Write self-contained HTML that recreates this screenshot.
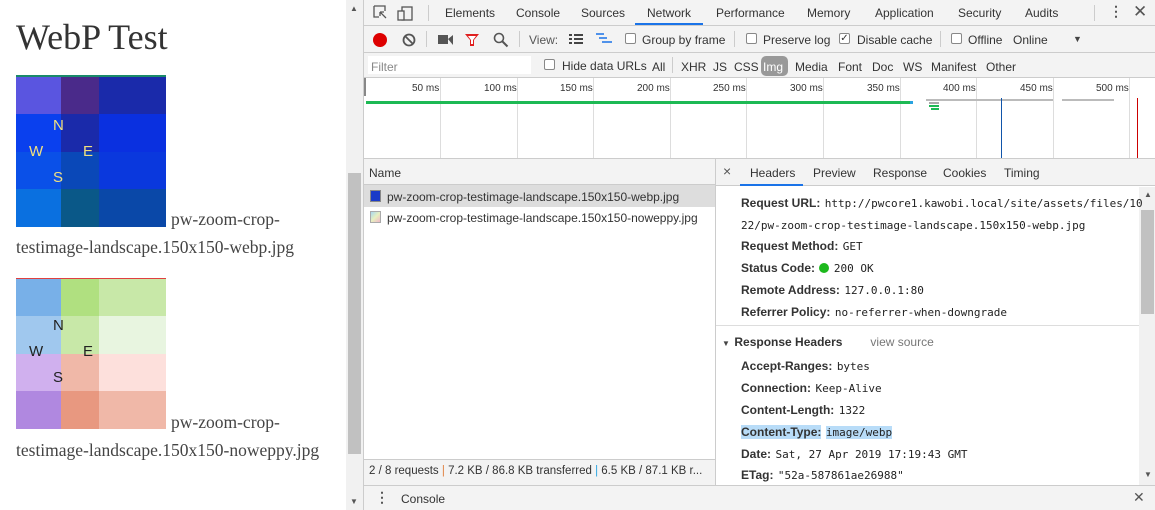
<!DOCTYPE html>
<html><head><meta charset="utf-8"><style>
*{box-sizing:border-box;margin:0;padding:0}
body{width:1155px;height:510px;overflow:hidden;background:#fff;font-family:"Liberation Sans",sans-serif;position:relative}
.a{position:absolute}
.pg{font-family:"Liberation Serif",serif;color:#444}
.img{position:absolute;width:150px;height:150px;display:grid;grid-template-columns:45px 38px 67px;grid-template-rows:37px 38px 37px 38px}
.lt{position:absolute;font:15px "Liberation Sans",sans-serif}
.dt{font-size:12px;color:#333}
.tab{position:absolute;top:6px;font-size:12px;color:#333}
.k{font-weight:bold;color:#333;font-size:12px}
.v{font-family:"DejaVu Sans Mono","Liberation Mono",monospace;font-size:11px;color:#222}
.row{position:absolute;left:741px;white-space:nowrap}
.cb{position:absolute;width:11px;height:11px;border:1px solid #888;border-radius:2px;background:#fff}
.vl{position:absolute;width:1px;background:#ccc}
</style></head><body>
<!-- page -->
<div class="a pg" style="left:16px;top:16px;font-size:36px;color:#333">WebP Test</div>
<div class="img" style="left:16px;top:75px;border-top:2px solid #1a8a6a">
<div style="background:#5a55e0"></div><div style="background:#4a2a8a"></div><div style="background:#1a2aaa"></div>
<div style="background:#0a40ee"></div><div style="background:#1a2aaa"></div><div style="background:#0a30e0"></div>
<div style="background:#0a50e8"></div><div style="background:#0a48b8"></div><div style="background:#0a38dd"></div>
<div style="background:#0a70e0"></div><div style="background:#0a5888"></div><div style="background:#0a48a8"></div>
<span class="lt" style="left:37px;top:40px;color:#f0e080">N</span><span class="lt" style="left:13px;top:66px;color:#f0e080">W</span><span class="lt" style="left:67px;top:66px;color:#f0e080">E</span><span class="lt" style="left:37px;top:92px;color:#f0e080">S</span>
</div>
<div class="a pg" style="left:171px;top:209px;font-size:17.5px">pw-zoom-crop-</div>
<div class="a pg" style="left:16px;top:237px;font-size:17.5px">testimage-landscape.150x150-webp.jpg</div>
<div class="img" style="left:16px;top:278px;border-top:1px solid #e04040;border-bottom:1px solid #e04040">
<div style="background:#78b0e8"></div><div style="background:#b0e080"></div><div style="background:#c8e8a8"></div>
<div style="background:#a0c8ee"></div><div style="background:#c8e8a8"></div><div style="background:#e8f5e0"></div>
<div style="background:#d0b0ee"></div><div style="background:#f0b8a8"></div><div style="background:#fde0dc"></div>
<div style="background:#b088e0"></div><div style="background:#e89880"></div><div style="background:#f0b8a8"></div>
<span class="lt" style="left:37px;top:38px;color:#222">N</span><span class="lt" style="left:13px;top:64px;color:#222">W</span><span class="lt" style="left:67px;top:64px;color:#222">E</span><span class="lt" style="left:37px;top:90px;color:#222">S</span>
</div>
<div class="a pg" style="left:171px;top:412px;font-size:17.5px">pw-zoom-crop-</div>
<div class="a pg" style="left:16px;top:440px;font-size:17.5px">testimage-landscape.150x150-noweppy.jpg</div>
<!-- page scrollbar -->
<div class="a" style="left:346px;top:0;width:17px;height:510px;background:#f1f1f1"></div>
<div class="a" style="left:348px;top:173px;width:13px;height:281px;background:#c1c1c1"></div>
<div class="a" style="left:350px;top:4px;font-size:8px;color:#555">▲</div>
<div class="a" style="left:350px;top:497px;font-size:8px;color:#555">▼</div>
<!-- devtools -->
<div class="a" style="left:363px;top:0;width:792px;height:510px;background:#fff;border-left:1px solid #ccc"></div>
<div class="a" style="left:364px;top:0;width:791px;height:77px;background:#f3f3f3"></div>
<div class="a" style="left:364px;top:25px;width:791px;height:1px;background:#ccc"></div>
<div class="a" style="left:364px;top:52px;width:791px;height:1px;background:#ccc"></div>
<div class="a" style="left:364px;top:77px;width:791px;height:1px;background:#ccc"></div>
<svg class="a" style="left:372px;top:4px" width="50" height="18"><path d="M2 2h11v5M2 2v11h5M8 8l6 6M8 8h4M8 8v4" stroke="#555" fill="none" stroke-width="1.3"/><rect x="30" y="3" width="10" height="13" stroke="#555" fill="none" stroke-width="1.3"/><rect x="26" y="7" width="6" height="9" stroke="#555" fill="#f3f3f3" stroke-width="1.3"/></svg>
<div class="vl" style="left:428px;top:5px;height:16px"></div>
<span class="tab" style="left:445px">Elements</span><span class="tab" style="left:516px">Console</span><span class="tab" style="left:581px">Sources</span><span class="tab" style="left:647px">Network</span><span class="tab" style="left:716px">Performance</span><span class="tab" style="left:807px">Memory</span><span class="tab" style="left:875px">Application</span><span class="tab" style="left:958px">Security</span><span class="tab" style="left:1025px">Audits</span>
<div class="a" style="left:635px;top:23px;width:68px;height:2px;background:#1a73e8"></div>
<div class="vl" style="left:1094px;top:5px;height:16px"></div>
<div class="a" style="left:1109px;top:3px;font-size:14px;color:#555;font-weight:bold">⋮</div>
<div class="a" style="left:1133px;top:2px;font-size:17px;color:#555">✕</div>
<!-- toolbar -->
<div class="a" style="left:373px;top:33px;width:14px;height:14px;border-radius:50%;background:#d00"></div>
<svg class="a" style="left:402px;top:33px" width="14" height="14"><circle cx="7" cy="7" r="5.5" stroke="#555" stroke-width="1.8" fill="none"/><path d="M3 3l8 8" stroke="#555" stroke-width="1.8"/></svg>
<div class="vl" style="left:426px;top:31px;height:16px"></div>
<svg class="a" style="left:438px;top:34px" width="16" height="12"><rect x="0" y="1" width="10" height="9" fill="#555"/><path d="M10 5l5-4v10z" fill="#555"/></svg>
<svg class="a" style="left:465px;top:33px" width="14" height="14"><path d="M0 1h14l-5 6v6h-4v-6z" fill="#e02020"/><path d="M3 3h8l-3 4v4h-2v-4z" fill="#fff"/></svg>
<svg class="a" style="left:493px;top:32px" width="16" height="16"><circle cx="6" cy="6" r="4.5" stroke="#555" stroke-width="1.6" fill="none"/><path d="M9.5 9.5l5 5" stroke="#555" stroke-width="2"/></svg>
<div class="vl" style="left:519px;top:31px;height:16px"></div>
<span class="a dt" style="left:529px;top:33px;color:#555">View:</span>
<svg class="a" style="left:569px;top:34px" width="14" height="11"><path d="M0 1h3M5 1h9M0 5h3M5 5h9M0 9h3M5 9h9" stroke="#444" stroke-width="2"/></svg>
<svg class="a" style="left:596px;top:33px" width="18" height="12"><path d="M0 1h8M3 5h8M6 9h4M10 9h6" stroke="#1a73e8" stroke-width="1.6"/></svg>
<div class="cb" style="left:625px;top:33px"></div><span class="a dt" style="left:642px;top:33px">Group by frame</span>
<div class="vl" style="left:734px;top:31px;height:16px"></div>
<div class="cb" style="left:746px;top:33px"></div><span class="a dt" style="left:763px;top:33px">Preserve log</span>
<div class="cb" style="left:839px;top:33px;font-size:10px;line-height:9px;text-align:center;color:#333">✓</div><span class="a dt" style="left:857px;top:33px">Disable cache</span>
<div class="vl" style="left:940px;top:31px;height:16px"></div>
<div class="cb" style="left:951px;top:33px"></div><span class="a dt" style="left:968px;top:33px">Offline</span><span class="a dt" style="left:1013px;top:33px">Online</span>
<span class="a" style="left:1073px;top:34px;font-size:9px;color:#444">▼</span>
<!-- filter row -->
<div class="a" style="left:368px;top:56px;width:163px;height:18px;background:#fff"></div>
<span class="a dt" style="left:371px;top:60px;color:#888">Filter</span>
<div class="cb" style="left:544px;top:59px"></div><span class="a dt" style="left:562px;top:59px">Hide data URLs</span><span class="a dt" style="left:652px;top:60px">All</span>
<div class="vl" style="left:672px;top:57px;height:16px"></div>
<span class="a dt" style="left:681px;top:60px">XHR</span><span class="a dt" style="left:713px;top:60px">JS</span><span class="a dt" style="left:734px;top:60px">CSS</span>
<div class="a" style="left:761px;top:56px;width:27px;height:20px;border-radius:5px;background:#999"></div>
<span class="a dt" style="left:763px;top:60px;color:#fff">Img</span>
<span class="a dt" style="left:795px;top:60px">Media</span><span class="a dt" style="left:838px;top:60px">Font</span><span class="a dt" style="left:872px;top:60px">Doc</span><span class="a dt" style="left:903px;top:60px">WS</span><span class="a dt" style="left:931px;top:60px">Manifest</span><span class="a dt" style="left:986px;top:60px">Other</span>
<!-- timeline -->
<div class="a" style="left:364px;top:78px;width:2px;height:18px;background:#888"></div>
<div class="vl" style="left:440px;top:78px;height:80px;background:#ddd"></div>
<div class="vl" style="left:517px;top:78px;height:80px;background:#ddd"></div>
<div class="vl" style="left:593px;top:78px;height:80px;background:#ddd"></div>
<div class="vl" style="left:670px;top:78px;height:80px;background:#ddd"></div>
<div class="vl" style="left:746px;top:78px;height:80px;background:#ddd"></div>
<div class="vl" style="left:823px;top:78px;height:80px;background:#ddd"></div>
<div class="vl" style="left:900px;top:78px;height:80px;background:#ddd"></div>
<div class="vl" style="left:976px;top:78px;height:80px;background:#ddd"></div>
<div class="vl" style="left:1053px;top:78px;height:80px;background:#ddd"></div>
<div class="vl" style="left:1129px;top:78px;height:80px;background:#ddd"></div>
<div class="a" style="font-size:10px;color:#333;top:83px;left:412px">50 ms</div>
<div class="a" style="font-size:10px;color:#333;top:83px;left:484px">100 ms</div>
<div class="a" style="font-size:10px;color:#333;top:83px;left:560px">150 ms</div>
<div class="a" style="font-size:10px;color:#333;top:83px;left:637px">200 ms</div>
<div class="a" style="font-size:10px;color:#333;top:83px;left:713px">250 ms</div>
<div class="a" style="font-size:10px;color:#333;top:83px;left:790px">300 ms</div>
<div class="a" style="font-size:10px;color:#333;top:83px;left:867px">350 ms</div>
<div class="a" style="font-size:10px;color:#333;top:83px;left:943px">400 ms</div>
<div class="a" style="font-size:10px;color:#333;top:83px;left:1020px">450 ms</div>
<div class="a" style="font-size:10px;color:#333;top:83px;left:1096px">500 ms</div>
<div class="a" style="left:366px;top:101px;width:544px;height:3px;background:#1db954"></div>
<div class="a" style="left:910px;top:101px;width:3px;height:3px;background:#29a3e0"></div>
<div class="a" style="left:926px;top:99px;width:127px;height:2px;background:#bbb"></div>
<div class="a" style="left:929px;top:102px;width:10px;height:2px;background:#aaa"></div>
<div class="a" style="left:929px;top:105px;width:10px;height:2px;background:#1db954"></div>
<div class="a" style="left:931px;top:108px;width:8px;height:2px;background:#1db954"></div>
<div class="a" style="left:1062px;top:99px;width:52px;height:2px;background:#bbb"></div>
<div class="a" style="left:1001px;top:98px;width:1px;height:60px;background:#1155aa"></div>
<div class="a" style="left:1137px;top:98px;width:1px;height:60px;background:#c00"></div>
<div class="a" style="left:364px;top:158px;width:791px;height:1px;background:#ccc"></div>
<!-- name panel -->
<div class="a" style="left:364px;top:159px;width:351px;height:26px;background:#f3f3f3;border-bottom:1px solid #ccc"></div>
<span class="a dt" style="left:369px;top:166px">Name</span>
<div class="a" style="left:364px;top:185px;width:351px;height:22px;background:#ddd"></div>
<div class="a" style="left:370px;top:190px;width:11px;height:12px;border:1px solid #888;background:#1a3ac8"></div>
<span class="a dt" style="left:387px;top:190px">pw-zoom-crop-testimage-landscape.150x150-webp.jpg</span>
<div class="a" style="left:370px;top:211px;width:11px;height:12px;border:1px solid #aaa;background:linear-gradient(135deg,#a8d8f0,#e8f0c0,#f0b8c8)"></div>
<span class="a dt" style="left:387px;top:211px">pw-zoom-crop-testimage-landscape.150x150-noweppy.jpg</span>
<div class="a" style="left:715px;top:159px;width:1px;height:326px;background:#ccc"></div>
<div class="a" style="left:364px;top:459px;width:351px;height:26px;background:#f3f3f3;border-top:1px solid #ccc"></div>
<span class="a" style="left:369px;top:465px;font-size:11.5px;color:#333">2 / 8 requests <span style="color:#e08040">|</span> 7.2 KB / 86.8 KB transferred <span style="color:#29a3e0">|</span> 6.5 KB / 87.1 KB r...</span>
<!-- headers panel -->
<div class="a" style="left:716px;top:159px;width:439px;height:27px;background:#f3f3f3;border-bottom:1px solid #ccc"></div>
<span class="a" style="left:723px;top:163px;font-size:14px;color:#555">×</span>
<span class="a dt" style="left:750px;top:166px">Headers</span><span class="a dt" style="left:813px;top:166px">Preview</span><span class="a dt" style="left:873px;top:166px">Response</span><span class="a dt" style="left:943px;top:166px">Cookies</span><span class="a dt" style="left:1004px;top:166px">Timing</span>
<div class="a" style="left:740px;top:184px;width:63px;height:2px;background:#1a73e8"></div>
<div class="a" style="left:1139px;top:187px;width:16px;height:298px;background:#f1f1f1"></div>
<div class="a" style="left:1141px;top:210px;width:13px;height:104px;background:#c1c1c1"></div>
<span class="a" style="left:1144px;top:190px;font-size:8px;color:#555">▲</span>
<span class="a" style="left:1144px;top:470px;font-size:8px;color:#555">▼</span>
<div class="row" style="top:194px"><span class="k">Request URL:</span> <span class="v">http://pwcore1.kawobi.local/site/assets/files/10</span></div>
<div class="row" style="top:216px"><span class="v">22/pw-zoom-crop-testimage-landscape.150x150-webp.jpg</span></div>
<div class="row" style="top:237px"><span class="k">Request Method:</span> <span class="v">GET</span></div>
<div class="row" style="top:259px"><span class="k">Status Code:</span> <span style="display:inline-block;width:10px;height:10px;border-radius:50%;background:#1db91d;vertical-align:-1px"></span> <span class="v">200 OK</span></div>
<div class="row" style="top:281px"><span class="k">Remote Address:</span> <span class="v">127.0.0.1:80</span></div>
<div class="row" style="top:303px"><span class="k">Referrer Policy:</span> <span class="v">no-referrer-when-downgrade</span></div>
<div class="a" style="left:716px;top:325px;width:423px;height:1px;background:#ddd"></div>
<div class="a" style="left:722px;top:333px;white-space:nowrap"><span style="font-size:8px;color:#444">▼</span> <span class="k">Response Headers</span><span class="dt" style="margin-left:28px;color:#777">view source</span></div>
<div class="row" style="top:357px"><span class="k">Accept-Ranges:</span> <span class="v">bytes</span></div>
<div class="row" style="top:379px"><span class="k">Connection:</span> <span class="v">Keep-Alive</span></div>
<div class="row" style="top:401px"><span class="k">Content-Length:</span> <span class="v">1322</span></div>
<div class="row" style="top:423px"><span class="k" style="background:#b8dcf8">Content-Type:</span> <span class="v" style="background:#b8dcf8">image/webp</span></div>
<div class="row" style="top:445px"><span class="k">Date:</span> <span class="v">Sat, 27 Apr 2019 17:19:43 GMT</span></div>
<div class="row" style="top:466px"><span class="k">ETag:</span> <span class="v">"52a-587861ae26988"</span></div>
<!-- drawer -->
<div class="a" style="left:364px;top:485px;width:791px;height:25px;background:#f3f3f3;border-top:1px solid #ccc"></div>
<span class="a" style="left:375px;top:489px;font-size:14px;color:#555;font-weight:bold">⋮</span>
<span class="a dt" style="left:401px;top:492px">Console</span>
<span class="a" style="left:1133px;top:489px;font-size:14px;color:#555">✕</span>
</body></html>
